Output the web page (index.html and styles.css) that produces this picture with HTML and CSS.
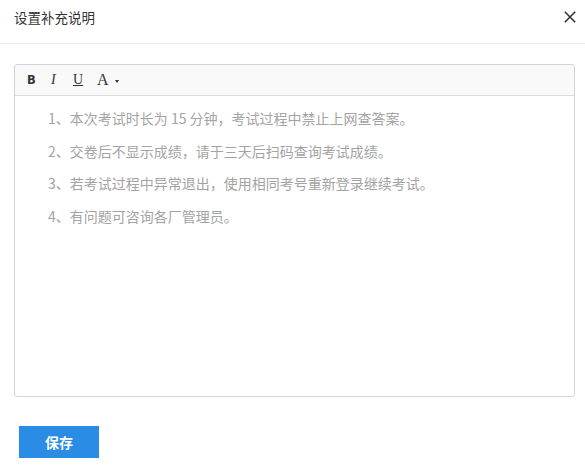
FILE: index.html
```html
<!DOCTYPE html>
<html lang="zh-CN">
<head>
<meta charset="utf-8">
<title>设置补充说明</title>
<link rel="stylesheet" href="styles.css">
</head>
<body>
<div class="dialog">
  <div class="header">
    <span class="title">设置补充说明</span>
    <span class="close" aria-label="关闭">
      <svg width="12" height="12" viewBox="0 0 12 12"><path d="M0.8 0.8 L11.2 11.2 M11.2 0.8 L0.8 11.2" stroke="#333" stroke-width="1.6" fill="none"/></svg>
    </span>
  </div>
  <div class="content">
    <div class="editor">
      <div class="toolbar">
        <span class="tb tb-b">B</span>
        <span class="tb tb-i">I</span>
        <span class="tb tb-u">U</span>
        <span class="tb tb-a">A<span class="caret"></span></span>
      </div>
      <div class="body">
        <p>1、本次考试时长为 15 分钟，考试过程中禁止上网查答案。</p>
        <p>2、交卷后不显示成绩，请于三天后扫码查询考试成绩。</p>
        <p>3、若考试过程中异常退出，使用相同考号重新登录继续考试。</p>
        <p>4、有问题可咨询各厂管理员。</p>
      </div>
    </div>
    <div class="actions">
      <button class="btn-save">保存</button>
    </div>
  </div>
</div>
</body>
</html>
```
FILE: styles.css
```css
html, body {
  margin: 0;
  padding: 0;
  background: #fff;
}
body {
  font-family: "Noto Sans CJK SC", "Noto Sans", sans-serif;
  color: #333;
}
.dialog {
  width: 585px;
  height: 475px;
}
.header {
  height: 43px;
  border-bottom: 1px solid #ececec;
  display: flex;
  justify-content: space-between;
  align-items: flex-start;
  padding: 0 9px 0 14px;
}
.title {
  font-size: 13.5px;
  line-height: 35px;
  color: #333;
}
.close {
  width: 12px;
  height: 12px;
  margin-top: 11px;
  display: flex;
}
.content {
  padding: 20px 10px 0 14px;
}
.editor {
  border: 1px solid #d4d4d4;
  border-radius: 3px;
  height: 331px;
  display: flex;
  flex-direction: column;
}
.toolbar {
  height: 30px;
  background: #f9f9f9;
  border-bottom: 1px solid #dcdcdc;
  border-radius: 3px 3px 0 0;
  display: flex;
  align-items: center;
  padding-left: 12px;
  color: #333;
}
.tb {
  font-size: 13px;
  line-height: 16px;
  display: inline-flex;
  align-items: center;
}
.tb-b {
  font-family: "DejaVu Sans", sans-serif;
  font-weight: bold;
  font-size: 11.5px;
  width: 24px;
}
.tb-i {
  font-family: "Liberation Serif", serif;
  font-style: italic;
  font-size: 14px;
  width: 22px;
}
.tb-u {
  font-family: "Liberation Serif", serif;
  font-size: 14px;
  text-decoration: underline;
  width: 24px;
}
.tb-a {
  font-family: "Liberation Serif", serif;
  font-size: 16px;
}
.caret {
  width: 0;
  height: 0;
  border-left: 2.5px solid transparent;
  border-right: 2.5px solid transparent;
  border-top: 3px solid #333;
  margin-left: 6px;
  margin-top: 2px;
}
.body {
  flex: 1;
  padding: 6px 33px 0 33px;
}
.body p {
  margin: 0;
  font-size: 14px;
  line-height: 32.5px;
  color: #a3a3a3;
  white-space: nowrap;
}
.actions {
  padding-top: 29px;
  padding-left: 5px;
}
.btn-save {
  width: 80px;
  height: 32px;
  border: none;
  border-radius: 0;
  background: #2a8ce4;
  color: #fff;
  font-family: "Noto Sans CJK SC", sans-serif;
  font-weight: bold;
  font-size: 14px;
  padding: 0;
  cursor: pointer;
}
```
